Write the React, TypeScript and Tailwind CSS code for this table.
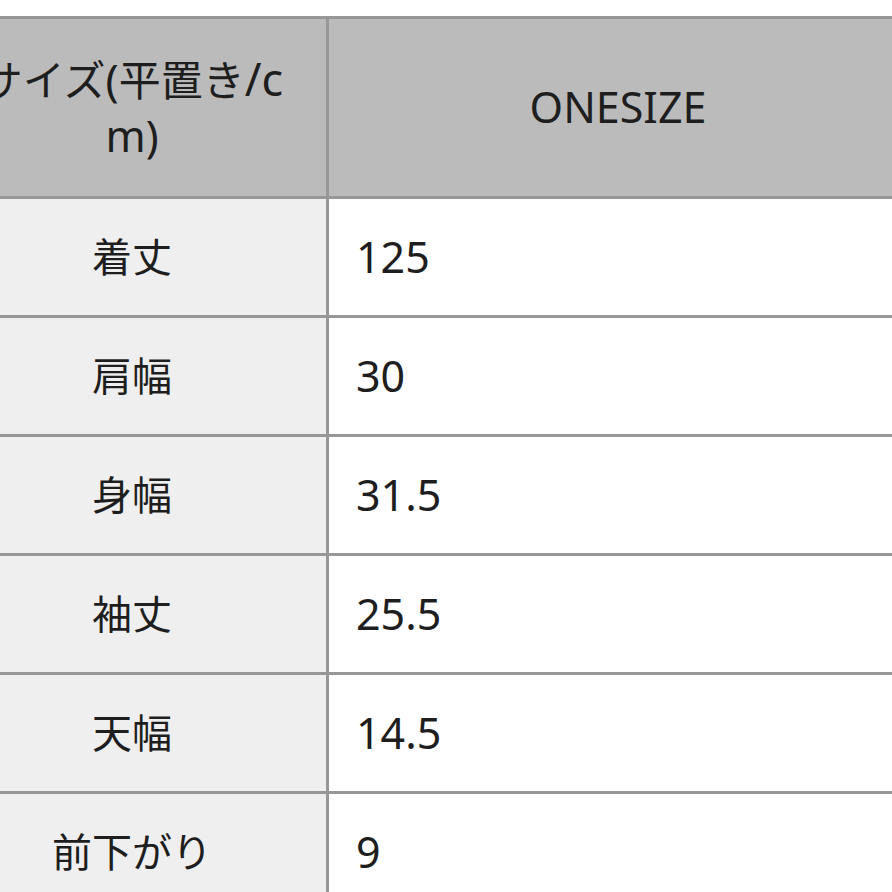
const rows = [
  { label: "着丈", value: "125" },
  { label: "肩幅", value: "30" },
  { label: "身幅", value: "31.5" },
  { label: "袖丈", value: "25.5" },
  { label: "天幅", value: "14.5" },
  { label: "前下がり", value: "9" },
]

export default function App() {
  return (
    <div className="h-[892px] w-[892px] overflow-hidden bg-white pt-[16px] font-['Noto_Sans','Noto_Sans_CJK_JP',sans-serif] text-[40px] text-[#1e1e1e]">
      <div className="ml-[-62px] grid w-[972px] grid-cols-[391px_581px] border-t-[3px] border-[#979797]">
        <div className="flex h-[180px] items-center justify-center border-r-[3px] border-b-[3px] border-[#979797] bg-[#bbbbbb] text-center text-[42px] leading-[56px]">
          <span>
            サイズ<span className="text-[44px]">(</span>平置き<span className="text-[45px]">/c</span>
            <br />
            <span className="text-[43px]">m)</span>
          </span>
        </div>
        <div className="flex h-[180px] items-center justify-center border-r-[3px] border-b-[3px] border-[#979797] bg-[#bbbbbb] text-[43px]">
          ONESIZE
        </div>
        {rows.map((row) => (
          <div className="contents" key={row.label}>
            <div className="flex h-[119px] items-center justify-center border-r-[3px] border-b-[3px] border-[#979797] bg-[#efefef]">
              {row.label}
            </div>
            <div className="flex h-[119px] items-center border-r-[3px] border-b-[3px] border-[#979797] bg-white pl-[27px] text-[43px]">
              {row.value}
            </div>
          </div>
        ))}
      </div>
    </div>
  )
}
